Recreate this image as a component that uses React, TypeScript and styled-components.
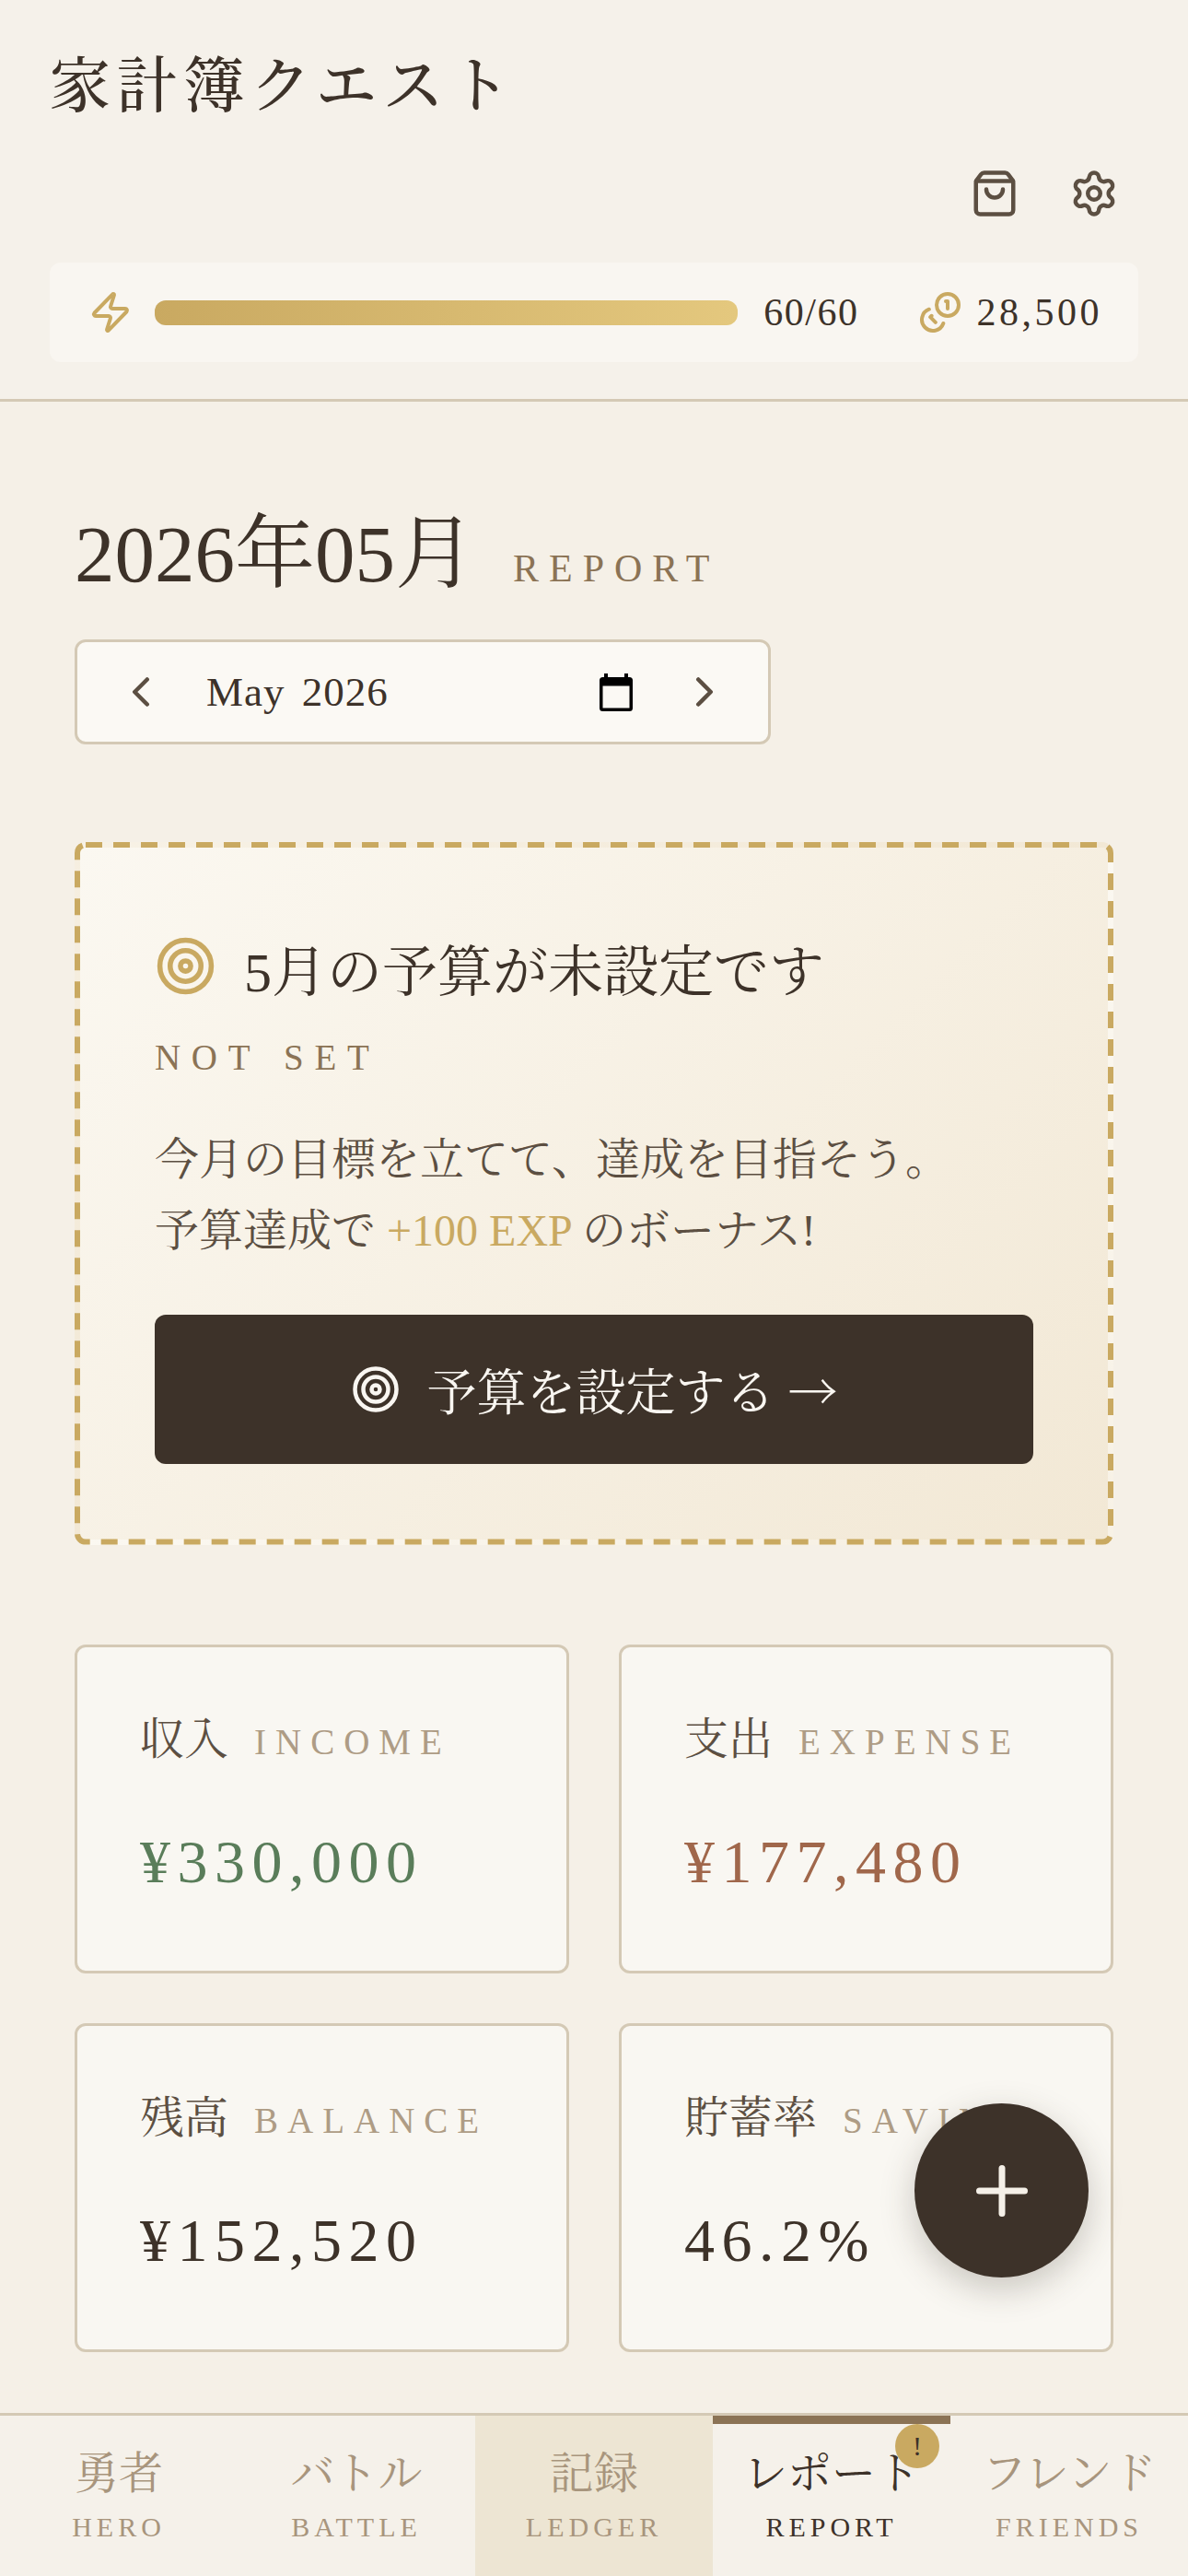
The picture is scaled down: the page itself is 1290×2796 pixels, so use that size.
import React from 'react';
import styled, { createGlobalStyle } from 'styled-components';
import { ChevronLeft, ChevronRight, Plus, Settings, ShoppingBag, Target, Zap } from 'lucide-react';

const SERIF = `"Liberation Serif", "Noto Serif CJK JP", "Noto Sans CJK JP", serif`;

const GlobalStyle = createGlobalStyle`
	html, body {
		margin: 0;
		padding: 0;
		background: #f5f1ea;
	}
	* {
		box-sizing: border-box;
	}
`;

const Page = styled.div`
	position: relative;
	width: 1290px;
	height: 2796px;
	display: flex;
	flex-direction: column;
	overflow: hidden;
	font-family: ${SERIF};
	color: #3d3229;
`;

const Header = styled.header`
	flex: none;
	height: 436px;
	padding: 51px 54px 0;
	background: #f5f1ea;
	border-bottom: 3px solid #d4c9b5;
`;

const AppTitle = styled.h1`
	margin: 0;
	font-size: 66px;
	line-height: 86px;
	font-weight: 500;
	letter-spacing: 6.6px;
`;

const Actions = styled.div`
	display: flex;
	justify-content: flex-end;
	gap: 12px;
	margin-top: 25px;
`;

const IconButton = styled.button`
	width: 96px;
	height: 96px;
	padding: 0;
	display: flex;
	align-items: center;
	justify-content: center;
	border: 0;
	background: none;
	color: #5c4f42;
`;

const StatusBar = styled.div`
	display: flex;
	align-items: center;
	height: 108px;
	margin-top: 27px;
	padding: 0 39px 0 42px;
	background: #f9f6f1;
	border-radius: 12px;
	color: #c9a961;
`;

const Gauge = styled.div`
	flex: 1;
	height: 27px;
	margin: 0 28px 0 24px;
	border-radius: 12px;
	background: linear-gradient(90deg, #c9a961, #e4c87e);
`;

const StatusText = styled.span<{ $gap?: number; $spacing: number }>`
	margin-right: ${(p) => p.$gap ?? 0}px;
	font-size: 42px;
	letter-spacing: ${(p) => p.$spacing}px;
	color: #3d3229;
`;

const CoinIcon = styled.svg`
	flex: none;
	width: 48px;
	height: 48px;
	margin-right: 16px;
	fill: none;
	stroke: currentColor;
	stroke-width: 2;
	stroke-linecap: round;
	stroke-linejoin: round;
`;

const Main = styled.main`
	flex: 1;
	min-height: 0;
	padding: 0 81px;
	overflow: hidden;
	background: #f5f0e7;
`;

const TitleRow = styled.div`
	display: flex;
	align-items: baseline;
	gap: 41px;
	margin-top: 110px;
`;

const MonthTitle = styled.h2`
	margin: 0;
	font-size: 87px;
	line-height: 112px;
	font-weight: 400;
`;

const MonthEyebrow = styled.span`
	font-size: 42px;
	letter-spacing: 11px;
	color: #8b7355;
`;

const MonthPicker = styled.div`
	display: flex;
	align-items: center;
	width: 756px;
	height: 114px;
	margin-top: 36px;
	padding: 0 42px;
	background: #fbf9f4;
	border: 3px solid #d4c9b5;
	border-radius: 12px;
	color: #5c4f42;
`;

const MonthValue = styled.span`
	flex: 1;
	margin-left: 44px;
	font-size: 45px;
	letter-spacing: 1px;
	word-spacing: 6px;
	color: #3d3229;
`;

const CalendarIcon = styled.svg`
	width: 36px;
	height: 41px;
	margin-right: 51px;
`;

const AlertCard = styled.section`
	position: relative;
	margin-top: 106px;
	padding: 81px 81px 82px;
	border: 6px solid transparent;
	border-radius: 12px;
	background: linear-gradient(135deg, #fbf8f1, #f2e8d5);
`;

// the 18/12 dash of the border, which a CSS dashed border of this width doesn't give
const DashFrame = styled.svg`
	position: absolute;
	top: -6px;
	left: -6px;
	width: calc(100% + 12px);
	height: calc(100% + 12px);
	pointer-events: none;
	rect {
		x: 3px;
		y: 3px;
		width: calc(100% - 6px);
		height: calc(100% - 6px);
		rx: 9px;
		fill: none;
		stroke: #c9a961;
		stroke-width: 6;
		stroke-dasharray: 18 12;
	}
`;

const AlertHeading = styled.h3`
	display: flex;
	align-items: center;
	gap: 30px;
	margin: 10px 0 0;
	font-size: 60px;
	line-height: 90px;
	font-weight: 400;
	svg {
		margin-bottom: 16px;
		color: #c9a961;
	}
`;

const AlertEyebrow = styled.div`
	margin-top: 20px;
	font-size: 39px;
	line-height: 54px;
	letter-spacing: 11.7px;
	word-spacing: 4px;
	color: #8b7355;
`;

const AlertBody = styled.p`
	margin: 46px 0 0;
	font-size: 48px;
	line-height: 76.8px;
	color: #5c4f42;
`;

const Bonus = styled.span`
	color: #c9a961;
`;

const AlertButton = styled.button`
	display: flex;
	align-items: center;
	justify-content: center;
	gap: 29px;
	width: 100%;
	height: 162px;
	margin-top: 52px;
	border: 0;
	border-radius: 12px;
	background: #3d3229;
	color: #f9f6f1;
	font-family: ${SERIF};
	font-size: 54px;
`;

const ButtonArrow = styled.span`
	margin-left: 14px;
	font-family: "Noto Serif CJK JP", "Noto Sans CJK JP", serif;
`;

const StatsGrid = styled.div`
	display: grid;
	grid-template-columns: repeat(2, minmax(0, 1fr));
	gap: 54px;
	margin-top: 108px;
`;

const StatCard = styled.div`
	height: 357px;
	padding: 66px 68px 0;
	background: #f9f7f2;
	border: 3px solid #d4c9b5;
	border-radius: 12px;
`;

const StatLabel = styled.div`
	display: flex;
	align-items: baseline;
	gap: 28px;
	font-size: 48px;
	line-height: 68px;
	color: #5c4f42;
	white-space: nowrap;
`;

const StatLabelEn = styled.span`
	font-size: 39px;
	letter-spacing: 10px;
	color: #ae9c85;
`;

const StatValue = styled.div<{ $tone?: string }>`
	margin-top: 51px;
	font-size: 66px;
	line-height: 90px;
	letter-spacing: 7.5px;
	color: ${(p) => p.$tone ?? '#3d3229'};
`;

const Fab = styled.button`
	position: absolute;
	right: 108px;
	bottom: 324px;
	width: 189px;
	height: 189px;
	display: flex;
	align-items: center;
	justify-content: center;
	border: 0;
	border-radius: 50%;
	background: #3d3229;
	color: #f5f0e8;
	box-shadow: 0 12px 36px rgba(61, 50, 41, 0.25);
`;

const TabBar = styled.nav`
	flex: none;
	display: grid;
	grid-template-columns: repeat(5, 1fr);
	height: 177px;
	background: #f5f1ea;
	border-top: 3px solid #d4c9b5;
`;

const Tab = styled.div<{ $active?: boolean; $current?: boolean }>`
	position: relative;
	display: flex;
	flex-direction: column;
	align-items: center;
	padding-top: 33px;
	background: ${(p) => (p.$current ? '#ede5d3' : 'transparent')};
	color: ${(p) => (p.$active ? '#3d3229' : '#a8957d')};
	${(p) => p.$active && 'border-top: 9px solid #8b7355; padding-top: 24px;'}
`;

const TabLabel = styled.span`
	font-size: 48px;
	line-height: 60px;
`;

const TabLabelEn = styled.span`
	margin-top: 10px;
	font-size: 30px;
	line-height: 36px;
	letter-spacing: 5px;
`;

const Badge = styled.span`
	position: absolute;
	top: 0;
	right: 12px;
	width: 48px;
	height: 48px;
	display: flex;
	align-items: center;
	justify-content: center;
	border-radius: 50%;
	background: #c9a961;
	color: #3d3229;
	font-size: 30px;
`;

const stats = [
	{ label: '収入', en: 'INCOME', value: '¥330,000', tone: '#5a7d5a' },
	{ label: '支出', en: 'EXPENSE', value: '¥177,480', tone: '#a0674b' },
	{ label: '残高', en: 'BALANCE', value: '¥152,520' },
	{ label: '貯蓄率', en: 'SAVING', value: '46.2%' },
];

const tabs = [
	{ label: '勇者', en: 'HERO' },
	{ label: 'バトル', en: 'BATTLE' },
	{ label: '記録', en: 'LEDGER', current: true },
	{ label: 'レポート', en: 'REPORT', active: true, badge: true },
	{ label: 'フレンド', en: 'FRIENDS' },
];

const App: React.FC = () => (
	<Page>
		<GlobalStyle />
		<Header>
			<AppTitle>家計簿クエスト</AppTitle>
			<Actions>
				<IconButton>
					<ShoppingBag size={54} />
				</IconButton>
				<IconButton>
					<Settings size={54} />
				</IconButton>
			</Actions>
			<StatusBar>
				<Zap size={48} />
				<Gauge />
				<StatusText $gap={64} $spacing={1.5}>
					60/60
				</StatusText>
				<CoinIcon viewBox="0 0 24 24">
					<circle cx="16" cy="8" r="6" />
					<path d="M5.91 10.37A6 6 0 1 0 13.66 18" />
					<path d="M15 6h1v4" />
					<path d="m7.29 13.88-.7.71 2.82 2.82" />
				</CoinIcon>
				<StatusText $spacing={3.5}>28,500</StatusText>
			</StatusBar>
		</Header>

		<Main>
			<TitleRow>
				<MonthTitle>2026年05月</MonthTitle>
				<MonthEyebrow>REPORT</MonthEyebrow>
			</TitleRow>
			<MonthPicker>
				<ChevronLeft size={54} />
				<MonthValue>May 2026</MonthValue>
				<CalendarIcon viewBox="0 0 36 41">
					<path
						fillRule="evenodd"
						d="M5 0h4v4h18V0h4v4h1.500a3.500 3.500 0 0 1 3.500 3.500v30a3.500 3.500 0 0 1-3.500 3.500h-29A3.500 3.500 0 0 1 0 37.500v-30A3.500 3.500 0 0 1 3.500 4H5zM3.500 13.500v24h29v-24z"
					/>
				</CalendarIcon>
				<ChevronRight size={54} />
			</MonthPicker>

			<AlertCard>
				<DashFrame>
					<rect />
				</DashFrame>
				<AlertHeading>
					<Target size={67} />
					5月の予算が未設定です
				</AlertHeading>
				<AlertEyebrow>NOT SET</AlertEyebrow>
				<AlertBody>
					今月の目標を立てて、達成を目指そう。
					<br />
					予算達成で <Bonus>+100 EXP</Bonus> のボーナス!
				</AlertBody>
				<AlertButton>
					<Target size={54} />
					<span>
						予算を設定する<ButtonArrow>→</ButtonArrow>
					</span>
				</AlertButton>
			</AlertCard>

			<StatsGrid>
				{stats.map((stat) => (
					<StatCard key={stat.en}>
						<StatLabel>
							{stat.label}
							<StatLabelEn>{stat.en}</StatLabelEn>
						</StatLabel>
						<StatValue $tone={stat.tone}>{stat.value}</StatValue>
					</StatCard>
				))}
			</StatsGrid>
		</Main>

		<Fab>
			<Plus size={84} />
		</Fab>

		<TabBar>
			{tabs.map((tab) => (
				<Tab key={tab.en} $active={tab.active} $current={tab.current}>
					<TabLabel>{tab.label}</TabLabel>
					<TabLabelEn>{tab.en}</TabLabelEn>
					{tab.badge && <Badge>!</Badge>}
				</Tab>
			))}
		</TabBar>
	</Page>
);

export default App;
